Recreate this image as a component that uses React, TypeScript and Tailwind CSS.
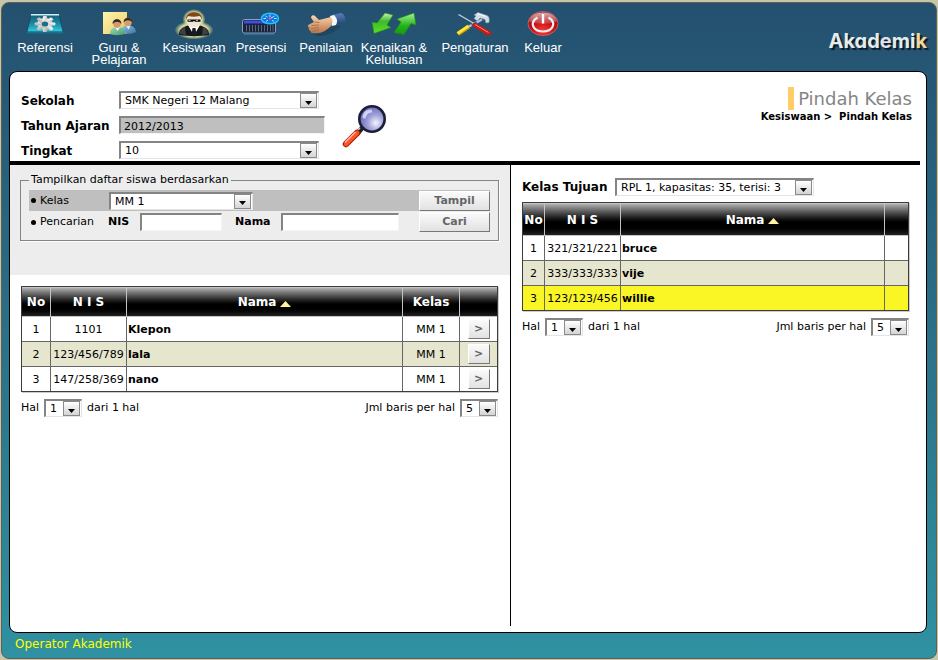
import React from "react";

type SelectProps = {
  id: string;
  label?: string;
  options: string[];
  className: string;
};

function Dropdown({ id, label, options, className }: SelectProps) {
  return (
    <span className={"relative inline-block h-[18px] shrink-0 " + className}>
      <select
        id={id}
        aria-label={label}
        className="block h-full w-full appearance-none rounded-none border-t-2 border-r border-b border-l-2 border-t-[#848484] border-r-[#e4e4e4] border-b-[#e4e4e4] border-l-[#848484] bg-white pt-px pl-1 text-[11px] leading-[14px] text-black outline-none"
      >
        {options.map((o) => (
          <option key={o}>{o}</option>
        ))}
      </select>
      <span className="pointer-events-none absolute top-[2px] right-[2px] flex h-[15px] w-[17px] items-center justify-center border border-[#8a8a8a] bg-linear-to-b from-white to-[#d4d4d4] pt-[4px]">
        <svg width="7" height="4" viewBox="0 0 7 4" aria-hidden="true">
          <path d="M0 0h7L3.5 4z" fill="#000" />
        </svg>
      </span>
    </span>
  );
}

function PushButton({ children, className }: { children: React.ReactNode; className: string }) {
  return (
    <button
      type="button"
      className={
        "shrink-0 border border-t-white border-r-[#777] border-b-[#777] border-l-white bg-linear-to-b from-[#fafafa] to-[#e2e2e2] text-center font-bold text-[#666] " +
        className
      }
    >
      {children}
    </button>
  );
}

const fieldClass =
  "rounded-none border-t-2 border-r border-b border-l-2 border-t-[#848484] border-r-[#f4f4f4] border-b-[#f4f4f4] border-l-[#848484] h-[18px] pt-px text-[11px] outline-none";

function ReferensiIcon() {
  return (
    <svg width="48" height="32" viewBox="0 0 48 32" aria-hidden="true">
      <defs>
        <linearGradient id="ref-bg" x1="0" y1="0" x2="0" y2="1">
          <stop offset="0" stopColor="#1c5a75" />
          <stop offset=".5" stopColor="#1685a0" />
          <stop offset="1" stopColor="#35cfe0" />
        </linearGradient>
        <linearGradient id="ref-gear" x1="0" y1="0" x2="1" y2="1">
          <stop offset="0" stopColor="#fff" />
          <stop offset="1" stopColor="#aaa" />
        </linearGradient>
      </defs>
      <path d="M10 6h28l4 18H6z" fill="url(#ref-bg)" stroke="#123f52" strokeWidth=".7" />
      <path d="M10 6h28l.3 1.500H9.700z" fill="#c9f4fa" />
      <path d="M6 23.500h36l.3 2H5.700z" fill="#16718a" />
      <g transform="translate(24 16) scale(1.15 .9)">
        <g fill="url(#ref-gear)">
          <circle r="6.800" />
          <rect x="-1.800" y="-9" width="3.600" height="18" rx="1" />
          <rect x="-1.800" y="-9" width="3.600" height="18" rx="1" transform="rotate(45)" />
          <rect x="-1.800" y="-9" width="3.600" height="18" rx="1" transform="rotate(90)" />
          <rect x="-1.800" y="-9" width="3.600" height="18" rx="1" transform="rotate(135)" />
        </g>
        <circle r="2.800" fill="#17708a" />
      </g>
    </svg>
  );
}

function GuruIcon() {
  return (
    <svg width="48" height="32" viewBox="0 0 48 32" aria-hidden="true">
      <defs>
        <linearGradient id="note" x1="0" y1="0" x2="1" y2="1">
          <stop offset="0" stopColor="#fff3b0" />
          <stop offset=".6" stopColor="#f3dc83" />
          <stop offset="1" stopColor="#d9b048" />
        </linearGradient>
        <linearGradient id="shirt-green" x1="0" y1="0" x2="1" y2="1">
          <stop offset="0" stopColor="#a4dfb6" />
          <stop offset="1" stopColor="#469a70" />
        </linearGradient>
        <linearGradient id="shirt-blue" x1="0" y1="0" x2="1" y2="1">
          <stop offset="0" stopColor="#93c6e2" />
          <stop offset="1" stopColor="#39719f" />
        </linearGradient>
      </defs>
      <rect x="8" y="4" width="24" height="22" fill="url(#note)" />
      <path d="M26 25c0-5 2-7.500 7-7.500s7.500 2.500 8 6.500c-3 2-8 2.400-15 1z" fill="url(#shirt-blue)" />
      <path d="M31 17.500l2.500 4 2-4z" fill="#eef6fb" />
      <ellipse cx="33" cy="14" rx="3.800" ry="4.300" fill="#d59a70" />
      <path d="M28.600 14.500c-.4-6.500 9.200-6.500 8.800 0-2-2.500-6-3.500-8.800 0z" fill="#39291f" />
      <path d="M15 26c0-5 2.500-7 7.500-7s7 2 7 7c-4 1.500-11 1.500-14.500 0z" fill="url(#shirt-green)" />
      <path d="M20 19l2.500 4 2.500-4z" fill="#f4fff8" />
      <ellipse cx="22" cy="15.500" rx="3.900" ry="4.500" fill="#d49a72" />
      <path d="M17.600 16c-.4-6.500 9.200-6.500 8.800 0-2-2.500-6-3.500-8.800 0z" fill="#33271f" />
    </svg>
  );
}

function KesiswaanIcon() {
  return (
    <svg width="48" height="32" viewBox="0 0 48 32" aria-hidden="true">
      <defs>
        <radialGradient id="halo">
          <stop offset=".7" stopColor="#d6dc92" />
          <stop offset="1" stopColor="#d6dc92" stopOpacity="0" />
        </radialGradient>
      </defs>
      <ellipse cx="24" cy="22" rx="19.500" ry="9.500" fill="url(#halo)" />
      <ellipse cx="24" cy="11.500" rx="11.500" ry="10.500" fill="url(#halo)" />
      <path d="M9 27c0-5 2-7.500 9-9.500h12c7 2 9 4.500 9 9.500-9 1.500-21 1.500-30 0z" fill="#16171b" />
      <path d="M18 17l6 10.500L30 17z" fill="#fff" />
      <path d="M22.500 20h3l1 6.500-2.500 2-2.500-2z" fill="#1b1b22" />
      <path d="M10 26c0-4 2-6 5-7l1 8zM38 26c0-4-2-6-5-7l-1 8z" fill="#5a5c62" opacity=".6" />
      <ellipse cx="24" cy="12.500" rx="7.500" ry="7" fill="#f1e4d6" />
      <path d="M16 12c-1.500-10.500 17.500-10.500 16 0-.6-2.500-1.500-3.500-2.500-4-4 1-8 1-11 0-1.400 1-2 2-2.500 4z" fill="#80471c" />
      <path d="M17.500 11.500h13v2.300h-5.200l-1.300-.8-1.300.8h-5.200z" fill="#080808" />
      <path d="M18.500 12.400h2M26 12.400h2" stroke="#eee" strokeWidth=".8" />
    </svg>
  );
}

function PresensiIcon() {
  return (
    <svg width="48" height="32" viewBox="0 0 48 32" aria-hidden="true">
      <rect x="5.500" y="11.500" width="33" height="13.500" rx="2" fill="#1b2338" stroke="#8c9fc0" />
      <path d="M7 12.500h30v3H7z" fill="#3f4de0" />
      <path d="M7 26h30" stroke="#3f87b0" />
      <g stroke="#5c6880">
        <path d="M9.500 17v6.500M12.500 17v6.500M15.500 17v6.500M18.500 17v6.500M21.500 17v6.500M24.500 17v6.500M27.500 17v6.500M30.500 17v6.500M33.500 17v6.500M36 17v6.500" />
      </g>
      <ellipse cx="33" cy="10.500" rx="8.500" ry="5.300" fill="#1773de" stroke="#1ec6ff" strokeWidth="1.500" />
      <path d="M33 6.500v2.500M26.500 10.500h2.500M37 10.500h2.500M28.500 8l2 1.200M37.500 8l-4 2.500M29 13.500l2-1.200M37 13.500l-2-1.200" stroke="#a4ecff" />
      <circle cx="33" cy="10.500" r="1.200" fill="#ff4c8c" />
    </svg>
  );
}

function PenilaianIcon() {
  return (
    <svg width="48" height="32" viewBox="0 0 48 32" aria-hidden="true">
      <defs>
        <linearGradient id="skin" x1="0" y1="0" x2="0" y2="1">
          <stop offset="0" stopColor="#ffd5ae" />
          <stop offset="1" stopColor="#b9754a" />
        </linearGradient>
        <linearGradient id="sleeve" x1="0" y1="0" x2="0" y2="1">
          <stop offset="0" stopColor="#5a82ba" />
          <stop offset="1" stopColor="#223f70" />
        </linearGradient>
      </defs>
      <path d="M12 27c9 3 20-2 27-9l-6-1z" fill="#173851" opacity=".5" />
      <path d="M30 7l9-2c3 1 5 5 4 8l-9 4z" fill="url(#sleeve)" />
      <path d="M28 8l4-1c3 3 4 6 2 10l-4 1z" fill="#f7f9fc" />
      <path d="M29 9l-8 2-4 1-4-4c-2-2-5 0-3.500 2.500L12 14l-5 2.500c-2 1.500-1 3 .5 3-1.500 1.500-.5 3 1 3 0 2 1.500 3 3.500 2.500 7 1 12-2 17.500-7.500 1.500-3 1-6-.5-8.500z" fill="url(#skin)" />
      <path d="M9.500 17.500l7.500-.5M9 20.500l8-1M10.500 23.500l6.500-2M12.500 14l5 .5" stroke="#995f39" strokeWidth=".7" fill="none" />
    </svg>
  );
}

function KenaikanIcon() {
  return (
    <svg width="48" height="32" viewBox="0 0 48 32" aria-hidden="true">
      <defs>
        <linearGradient id="green-down" x1="0" y1="0" x2="0" y2="1">
          <stop offset="0" stopColor="#c9f7b4" />
          <stop offset=".4" stopColor="#3fb92e" />
          <stop offset="1" stopColor="#5ee01c" />
        </linearGradient>
        <linearGradient id="green-up" x1="0" y1="0" x2="0" y2="1">
          <stop offset="0" stopColor="#a9f394" />
          <stop offset=".6" stopColor="#1fb315" />
          <stop offset="1" stopColor="#149a0c" />
        </linearGradient>
      </defs>
      <path d="M15 5l8 2-6 10 4 2.500L4 25.500 2 14l5 1z" fill="url(#green-down)" stroke="#218d16" strokeWidth=".6" />
      <path d="M24 24.500L31 14l-4-3 17-6 2 12-5-1.500-7 11z" fill="url(#green-up)" stroke="#218d16" strokeWidth=".6" />
    </svg>
  );
}

function PengaturanIcon() {
  return (
    <svg width="48" height="32" viewBox="0 0 48 32" aria-hidden="true">
      <path d="M7.500 6.500L24 16" stroke="#c9d4dc" strokeWidth="1.200" />
      <path d="M31 11.500L17 19" stroke="#b8c8d8" strokeWidth="2" />
      <path d="M26 14.500l-5 3" stroke="#1676ef" strokeWidth="2.500" />
      <path d="M18 18.500L7 26" stroke="#b69111" strokeWidth="4.500" />
      <path d="M17.500 18L6.500 25.500" stroke="#ffe72e" strokeWidth="3" />
      <path d="M20 17l4-2.500 15.500 9c2 2 0 5-3 4z" fill="#c91b14" />
      <path d="M24 16.500l13.500 8" stroke="#ff8a78" />
      <path d="M23 7l4-2.500 9 3c2.500 1 2.500 4 2 7l-3 .5-1-3.500-5-1.500-2.500 3-3.500-2.500 2-2.500z" fill="#d3dde6" stroke="#8499a9" strokeWidth=".6" />
      <path d="M26 5.500l9 3" stroke="#fff" />
    </svg>
  );
}

function KeluarIcon() {
  return (
    <svg width="48" height="32" viewBox="0 0 48 32" aria-hidden="true">
      <defs>
        <radialGradient id="power" cx=".5" cy=".8" r=".75">
          <stop offset="0" stopColor="#ff3a34" />
          <stop offset=".55" stopColor="#bb0f17" />
          <stop offset="1" stopColor="#8c1018" />
        </radialGradient>
        <linearGradient id="gloss" x1="0" y1="0" x2="0" y2="1">
          <stop offset="0" stopColor="#fff" stopOpacity=".65" />
          <stop offset="1" stopColor="#fff" stopOpacity=".15" />
        </linearGradient>
      </defs>
      <ellipse cx="24" cy="15.500" rx="15" ry="12" fill="url(#power)" stroke="#d96a6e" strokeWidth=".8" />
      <path d="M10 13.500C11.500 1.500 36.500 1.500 38 13.500c-8 3-20 3-28 0z" fill="url(#gloss)" />
      <path d="M18.500 9.500c-9 5.500-4 14 5.500 14s14.500-8.500 5.500-14" fill="none" stroke="#f6ecec" strokeWidth="2.200" />
      <path d="M24 6v9.500" stroke="#fff" strokeWidth="2.400" />
    </svg>
  );
}

function MagnifierIcon() {
  return (
    <svg width="46" height="46" viewBox="0 0 46 46" aria-hidden="true">
      <defs>
        <radialGradient id="lens" cx=".65" cy=".65" r=".65">
          <stop offset="0" stopColor="#f4f4ff" />
          <stop offset=".5" stopColor="#9da0d9" />
          <stop offset="1" stopColor="#6a6db5" />
        </radialGradient>
      </defs>
      <path d="M21 24l-5 6" stroke="#222" strokeWidth="5" />
      <path d="M19 24l-3 3" stroke="#ccc" strokeWidth="1.500" />
      <path d="M16 29L5 40" stroke="#a51c08" strokeWidth="6.500" strokeLinecap="round" />
      <path d="M16 29L5 40" stroke="#ff5426" strokeWidth="4.500" strokeLinecap="round" />
      <path d="M14.500 28L4 38.500" stroke="#ffc1a5" strokeWidth="1.400" />
      <circle cx="31" cy="15" r="12.700" fill="url(#lens)" stroke="#1d1d38" strokeWidth="2.600" />
      <path d="M21.500 14c0-6 4-8.500 9-8.500l1 3c-4 0-6 2-7 6z" fill="#dedfff" opacity=".85" />
    </svg>
  );
}

const menu = [
  { lines: ["Referensi"], Icon: ReferensiIcon, width: "w-[70px]" },
  { lines: ["Guru &", "Pelajaran"], Icon: GuruIcon, width: "w-[78px]" },
  { lines: ["Kesiswaan"], Icon: KesiswaanIcon, width: "w-[72px]" },
  { lines: ["Presensi"], Icon: PresensiIcon, width: "w-[62px]" },
  { lines: ["Penilaian"], Icon: PenilaianIcon, width: "w-[68px]" },
  { lines: ["Kenaikan &", "Kelulusan"], Icon: KenaikanIcon, width: "w-[68px]" },
  { lines: ["Pengaturan"], Icon: PengaturanIcon, width: "w-[94px]" },
  { lines: ["Keluar"], Icon: KeluarIcon, width: "w-[42px]" },
];

function NameHeading() {
  return (
    <span className="inline-flex items-center gap-1">
      Nama
      <svg width="11" height="6" viewBox="0 0 11 6" aria-hidden="true" className="mt-[3px]">
        <path d="M5.500 0L11 6H0z" fill="#fff3a3" />
      </svg>
    </span>
  );
}

const headCell =
  "border-t border-r border-b border-[#c4c4c4] p-0 text-center text-[12px] font-bold text-white last:border-r-0 bg-linear-to-b from-[#b0b0b0] via-black via-65% to-[#222]";
const bodyCell =
  "border-r border-b border-[#666] px-0 pt-[2px] pb-0 text-center last:border-r-0 group-last:border-b-0";
const buttonCell = "border-b border-[#666] p-0 group-last:border-b-0";
const tableBox = "border border-[#3c3c3c] shadow-[1px_1px_0_#ccc]";

function Pager({ side }: { side: string }) {
  return (
    <div className="flex items-center justify-between">
      <div className="flex items-center">
        <label htmlFor={"page-" + side} className="mr-[5px]">
          Hal
        </label>
        <Dropdown id={"page-" + side} options={["1"]} className="w-[38px]" />
        <span className="ml-[5px]">dari 1 hal</span>
      </div>
      <div className="flex items-center">
        <label htmlFor={"rows-" + side} className="mr-[5px]">
          Jml baris per hal
        </label>
        <Dropdown id={"rows-" + side} options={["5", "10", "20"]} className="w-[38px]" />
      </div>
    </div>
  );
}

const sourceRows = [
  { nis: "1101", name: "Klepon", bg: "bg-white" },
  { nis: "123/456/789", name: "lala", bg: "bg-[#e6e6cf]" },
  { nis: "147/258/369", name: "nano", bg: "bg-white" },
];

const targetRows = [
  { nis: "321/321/221", name: "bruce", bg: "bg-white" },
  { nis: "333/333/333", name: "vije", bg: "bg-[#e6e6cf]" },
  { nis: "123/123/456", name: "willie", bg: "bg-[#faf626]" },
];

export default function App() {
  return (
    <div className="flex min-h-screen flex-col bg-[#c6c6a8] pt-[2px] pr-px pb-px pl-px font-['Verdana','DejaVu_Sans',sans-serif] text-[11px] leading-[14px] text-black">
      <div className="flex flex-1 flex-col rounded-lg border border-[#5e6058] bg-linear-to-b from-[#24506f] to-[#2f91a1] pr-[9px] pl-[7px]">
        <header className="flex h-[68px] items-start justify-between">
          <nav className="flex pt-[5px] pl-px font-['Liberation_Sans',Arial,sans-serif] text-[13px] leading-[12px] text-white">
            {menu.map(({ lines, Icon, width }) => (
              <button key={lines[0]} type="button" className={"flex flex-col items-center " + width}>
                <Icon />
                <span className="mt-[2px] whitespace-nowrap">
                  {lines.map((l) => (
                    <span key={l} className="block">
                      {l}
                    </span>
                  ))}
                </span>
              </button>
            ))}
          </nav>
          <div className="pt-[24px] font-['Inter',sans-serif] text-[20px] leading-[28px] font-bold text-[#e6ecea] [font-feature-settings:'cv11'] [text-shadow:2px_2px_1px_#0a1a26]">
            Akad<span className="text-[#e3e0ee]">e</span>mi<span className="text-[#f3d795]">k</span>
          </div>
        </header>

        <main className="flex flex-1 flex-col rounded-lg border border-black bg-white pr-[6px] pb-[6px]">
          <section className="flex items-start justify-between border-b-4 border-black pt-[19px] pb-[2px] pl-[11px]">
            <form className="flex">
              <div className="grid grid-cols-[98px_auto] gap-y-[7px]">
                <label htmlFor="sekolah" className="pt-[3px] text-[12px] font-bold">
                  Sekolah
                </label>
                <Dropdown id="sekolah" options={["SMK Negeri 12 Malang"]} className="w-[200px]" />
                <label htmlFor="tahun" className="pt-[3px] text-[12px] font-bold">
                  Tahun Ajaran
                </label>
                <input
                  id="tahun"
                  readOnly
                  defaultValue="2012/2013"
                  className={fieldClass + " w-[206px] bg-[#bfbfbf] pl-[3px]"}
                />
                <label htmlFor="tingkat" className="pt-[3px] text-[12px] font-bold">
                  Tingkat
                </label>
                <Dropdown id="tingkat" options={["10", "11", "12"]} className="w-[200px]" />
              </div>
              <button type="button" aria-label="Tampilkan" className="mt-[13px] ml-4 h-[46px]">
                <MagnifierIcon />
              </button>
            </form>
            <div className="-mt-1 pr-2 text-right">
              <h1 className="flex justify-end text-[18px] leading-[22px] text-[#858585]">
                <span className="mr-1 w-[6px] bg-[#fc6]" />
                <span className="pt-px">Pindah Kelas</span>
              </h1>
              <p className="text-[10px] leading-[14px] font-bold">
                <a href="#kesiswaan">Kesiswaan</a> &gt;&nbsp; Pindah Kelas
              </p>
            </div>
          </section>

          <div className="grid flex-1 grid-cols-[501fr_409fr]">
            <section className="border-r border-black">
              <div className="h-[110px] bg-[#ededed] pt-2 pr-[11px] pl-[10px]">
                <fieldset className="h-[68px] border border-[#848484] px-2 pt-[3px] shadow-[1px_1px_0_#fff]">
                  <legend className="px-[2px]">Tampilkan daftar siswa berdasarkan</legend>
                  <div className="flex h-[21px] items-center bg-[#bfbfbf]">
                    <label htmlFor="kelas" className="flex w-[80px] items-center">
                      <span className="mr-1 ml-[2px] size-[5px] rounded-full bg-black" />
                      Kelas
                    </label>
                    <Dropdown id="kelas" options={["MM 1"]} className="w-[144px]" />
                    <PushButton className="ml-auto h-[20px] w-[71px]">Tampil</PushButton>
                  </div>
                  <div className="mt-px flex h-[20px] items-center">
                    <span className="flex w-[79px] items-center">
                      <span className="mr-1 ml-[2px] size-[5px] rounded-full bg-black" />
                      Pencarian
                    </span>
                    <label htmlFor="nis" className="w-[32px] font-bold">
                      NIS
                    </label>
                    <input id="nis" className={fieldClass + " w-[82px] bg-white"} />
                    <label htmlFor="nama" className="ml-[13px] w-[46px] font-bold">
                      Nama
                    </label>
                    <input id="nama" className={fieldClass + " w-[118px] bg-white"} />
                    <PushButton className="ml-auto h-[20px] w-[71px]">Cari</PushButton>
                  </div>
                </fieldset>
              </div>

              <div className="pt-[11px] pr-3 pl-[11px]">
                <div className={tableBox}>
                  <table className="w-full table-fixed border-separate border-spacing-0">
                    <colgroup>
                      <col className="w-[29px]" />
                      <col className="w-[76px]" />
                      <col />
                      <col className="w-[57px]" />
                      <col className="w-[37px]" />
                    </colgroup>
                    <thead>
                      <tr className="h-[30px]">
                        <th className={headCell}>No</th>
                        <th className={headCell}>N I S</th>
                        <th className={headCell}>
                          <NameHeading />
                        </th>
                        <th className={headCell}>Kelas</th>
                        <th className={headCell} />
                      </tr>
                    </thead>
                    <tbody>
                      {sourceRows.map((r, i) => (
                        <tr key={r.nis} className={"group h-[25px] last:h-[24px] " + r.bg}>
                          <td className={bodyCell}>{i + 1}</td>
                          <td className={bodyCell}>{r.nis}</td>
                          <td className={bodyCell}>
                            <div className="pl-px text-left font-bold">{r.name}</div>
                          </td>
                          <td className={bodyCell}>MM 1</td>
                          <td className={buttonCell}>
                            <PushButton className="mx-auto block h-[20px] w-[22px]">&gt;</PushButton>
                          </td>
                        </tr>
                      ))}
                    </tbody>
                  </table>
                </div>
                <div className="pt-[7px]">
                  <Pager side="source" />
                </div>
              </div>
            </section>

            <section className="pt-[13px] pr-[11px] pl-[11px]">
              <div className="mb-[6px] flex items-center">
                <label htmlFor="tujuan" className="w-[93px] text-[12px] font-bold">
                  Kelas Tujuan
                </label>
                <Dropdown id="tujuan" options={["RPL 1, kapasitas: 35, terisi: 3"]} className="w-[199px]" />
              </div>
              <div className={tableBox}>
                <table className="w-full table-fixed border-separate border-spacing-0">
                  <colgroup>
                    <col className="w-[22px]" />
                    <col className="w-[76px]" />
                    <col />
                    <col className="w-[23px]" />
                  </colgroup>
                  <thead>
                    <tr className="h-[33px]">
                      <th className={headCell}>No</th>
                      <th className={headCell}>N I S</th>
                      <th className={headCell}>
                        <NameHeading />
                      </th>
                      <th className={headCell} />
                    </tr>
                  </thead>
                  <tbody>
                    {targetRows.map((r, i) => (
                      <tr key={r.nis} className={"group h-[25px] last:h-[24px] " + r.bg}>
                        <td className={bodyCell}>{i + 1}</td>
                        <td className={bodyCell}>{r.nis}</td>
                        <td className={bodyCell}>
                          <div className="pl-px text-left font-bold">{r.name}</div>
                        </td>
                        <td className={bodyCell} />
                      </tr>
                    ))}
                  </tbody>
                </table>
              </div>
              <div className="pt-[7px]">
                <Pager side="target" />
              </div>
            </section>
          </div>
        </main>

        <footer className="h-[25px] pt-[3px] pl-[6px] text-[12px] leading-[16px] text-[#ffff00]">
          Operator Akademik
        </footer>
      </div>
    </div>
  );
}
